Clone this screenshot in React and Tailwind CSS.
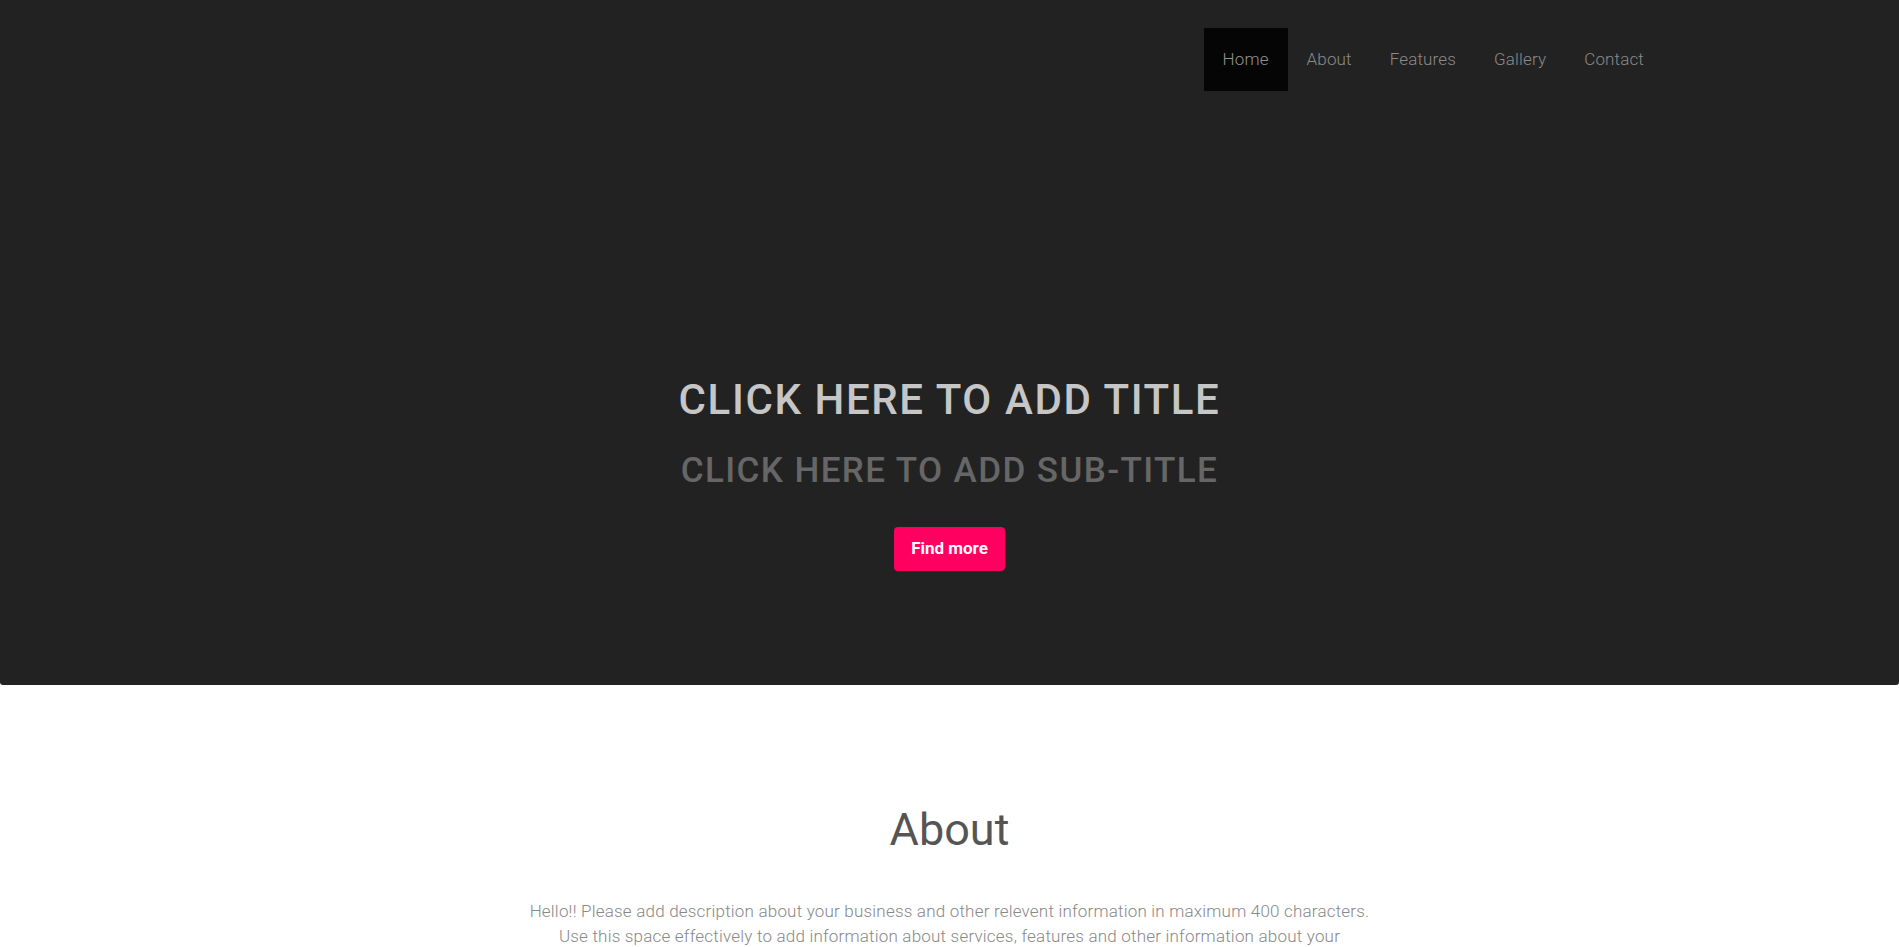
import React from 'react';

const navItems = ['Home', 'About', 'Features', 'Gallery', 'Contact'];

const NavBar = () => (
  <nav className="flex justify-end pt-[28px] pr-[236px]">
    <ul className="flex">
      {navItems.map((item, i) => (
        <li key={item}>
          <a
            href="#"
            className={`flex h-[63px] items-center px-[19px] text-[17px] font-light tracking-[0.15px] ${
              i === 0 ? 'bg-[#050505] text-[#929292]' : 'text-[#8a8a8a]'
            }`}
          >
            {item}
          </a>
        </li>
      ))}
    </ul>
  </nav>
);

const Hero = () => (
  <header className="h-[685px] rounded-b-[3px] bg-[#222222]">
    <NavBar />
    <div className="mt-[284px] flex flex-col items-center text-center">
      <h1 className="text-[42px] font-medium leading-[50px] tracking-[1.6px] text-[#c6c6c6]">CLICK HERE TO ADD TITLE</h1>
      <h2 className="mt-[25px] text-[35px] font-medium leading-[42px] tracking-[1.4px] text-[#666666]">
        CLICK HERE TO ADD SUB-TITLE
      </h2>
      <button
        type="button"
        className="mt-[35px] h-[44px] w-[111px] rounded-[4px] bg-[#ff0060] text-[17px] font-bold text-white"
      >
        Find more
      </button>
    </div>
  </header>
);

const About = () => (
  <section className="flex flex-col items-center pt-[118px] text-center">
    <h2 className="text-[45px] font-normal leading-[54px] text-[#555555]">About</h2>
    <p className="mt-[42px] w-[852px] text-[17px] font-light leading-[25px] tracking-[0.2px] text-[#888888]">
      Hello!! Please add description about your business and other relevent information in maximum 400 characters.
      Use this space effectively to add information about services, features and other information about your
      business. This helps visitors understand your business better.
    </p>
  </section>
);

export default function App() {
  return (
    <div className="min-h-screen bg-white font-['Roboto',sans-serif]">
      <Hero />
      <About />
    </div>
  );
}
